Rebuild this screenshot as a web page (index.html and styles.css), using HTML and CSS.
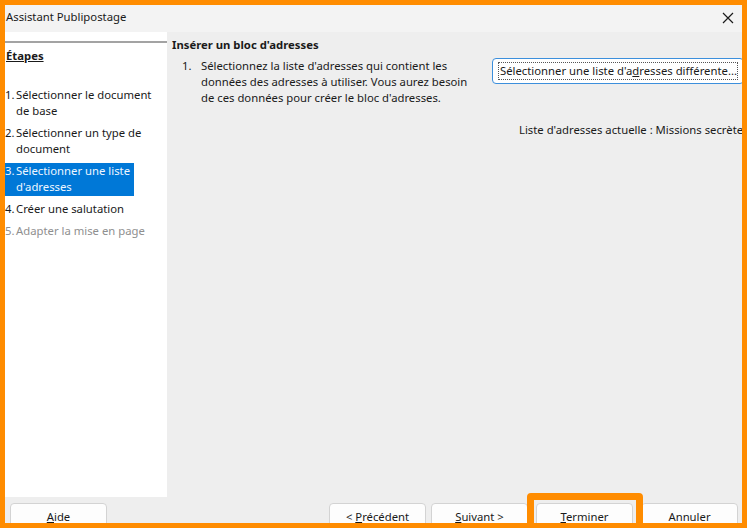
FILE: index.html
```html
<!DOCTYPE html>
<html lang="fr">
<head>
  <meta charset="UTF-8">
  <title>Assistant Publipostage</title>
  <link rel="stylesheet" href="styles.css">
</head>
<body>

  <div class="window">
    <div class="titlebar">
      <span class="title">Assistant Publipostage</span>
      <svg class="close" width="12" height="12" viewBox="0 0 12 12">
        <path d="M1 1 L11 11 M11 1 L1 11" stroke="#1b1b1b" stroke-width="1.2" fill="none"/>
      </svg>
    </div>

    <div class="main">
      <div class="steps">
        <div class="steps-rule"></div>
        <div class="steps-head">Étapes</div>
        <ul class="step-list">
          <li class="step"><span class="num">1.</span><span>Sélectionner le document<br>de base</span></li>
          <li class="step"><span class="num">2.</span><span>Sélectionner un type de<br>document</span></li>
          <li class="step active"><span class="num">3.</span><span>Sélectionner une liste<br>d'adresses</span></li>
          <li class="step"><span class="num">4.</span><span>Créer une salutation</span></li>
          <li class="step disabled"><span class="num">5.</span><span>Adapter la mise en page</span></li>
        </ul>
      </div>

      <div class="page">
        <h2>Insérer un bloc d'adresses</h2>
        <div class="row">
          <div class="instruction">
            <span class="num">1.</span>
            <span class="text">Sélectionnez la liste d'adresses qui contient les<br>données des adresses à utiliser. Vous aurez besoin<br>de ces données pour créer le bloc d'adresses.</span>
          </div>
          <button class="select-btn"><span class="focus">Sélectionner une liste d'a<u>d</u>resses différente...</span></button>
        </div>
        <div class="current">Liste d'adresses actuelle : Missions secrètes</div>
      </div>
    </div>

    <div class="footer">
      <button class="btn"><u>A</u>ide</button>
      <div class="spacer"></div>
      <button class="btn">&lt; <u>P</u>récédent</button>
      <button class="btn btn-next"><u>S</u>uivant &gt;</button>
      <button class="btn btn-gap"><u>T</u>erminer</button>
      <button class="btn btn-gap">Annuler</button>
    </div>
  </div>

  <div class="focus-mark"></div>

</body>
</html>
```

FILE: styles.css
```css
body {
  margin: 0;
  background: #ff8c00;
  font-family: "Noto Sans", sans-serif;
  font-size: 11.3px;
  color: #1a1a1a;
  height: 528px;
  overflow: hidden;
  position: relative;
}
.window {
  margin: 5px;
  width: 737px;
  height: 518px;
  background: #eeeeee;
  overflow: hidden;
  display: flex;
  flex-direction: column;
}
.titlebar {
  height: 27px;
  flex: none;
  background: #f3f3f3;
  display: flex;
  align-items: center;
  justify-content: space-between;
  padding: 0 8px 0 1px;
}
.title {
  line-height: 16px;
  margin-top: -3px;
}
.close {
  margin-top: -2px;
}
.main {
  flex: 1;
  display: flex;
  min-height: 0;
}
.steps {
  width: 162px;
  background: #ffffff;
  flex: none;
}
.steps-rule {
  height: 2px;
  background: #a3a3a3;
  margin-top: 9px;
}
.steps-head {
  font-weight: bold;
  text-decoration: underline;
  line-height: 16px;
  margin: 5px 0 0 1px;
}
.step-list {
  list-style: none;
  margin: 23px 0 0 0;
  padding: 0;
}
.step {
  display: flex;
  width: fit-content;
  line-height: 16px;
  margin-bottom: 6px;
  padding: 0 4px 0 0;
}
.step .num {
  width: 11px;
  flex: none;
}
.step.active {
  background: #0078d7;
  color: #eef6ff;
  padding-bottom: 1px;
  margin-bottom: 5px;
}
.step.disabled {
  color: #8f8f8f;
}
.page {
  flex: 1;
  padding: 5px 0 0 5px;
}
.page h2 {
  font-size: 11.3px;
  font-weight: bold;
  line-height: 16px;
  margin: 0;
}
.row {
  display: flex;
  align-items: flex-start;
  margin-top: 5px;
}
.instruction {
  display: flex;
  flex: none;
  line-height: 16px;
  padding-left: 10px;
}
.instruction .num {
  width: 19px;
  flex: none;
}
.instruction .text {
  width: 262px;
  white-space: nowrap;
}
.select-btn {
  margin-left: 29px;
  width: 252px;
  height: 26px;
  flex: none;
  background: #ffffff;
  border: 1px solid #3c8fdc;
  border-radius: 4px;
  font-family: inherit;
  font-size: inherit;
  color: #1a1a1a;
  padding: 2px 5px;
  text-align: left;
}
.select-btn .focus {
  display: block;
  border: 1px dotted #555;
  line-height: 16px;
  padding: 0 1px;
  white-space: nowrap;
}
.current {
  margin: 16px 0 0 347px;
  line-height: 16px;
  white-space: nowrap;
}
.footer {
  height: 20px;
  flex: none;
  display: flex;
  align-items: flex-start;
  padding: 6px 4px 0 5px;
}
.spacer {
  flex: 1;
}
.btn {
  width: 97px;
  height: 26px;
  flex: none;
  background: #fdfdfd;
  border: 1px solid #d3d3d3;
  border-radius: 4px;
  font-family: inherit;
  font-size: inherit;
  color: #1a1a1a;
  padding: 0;
}
.btn-next {
  margin-left: 5px;
}
.btn-gap {
  margin-left: 8px;
}
.focus-mark {
  position: absolute;
  left: 527px;
  top: 493px;
  width: 102px;
  height: 40px;
  border: 7px solid #ff8c00;
  border-radius: 4px;
}
```
